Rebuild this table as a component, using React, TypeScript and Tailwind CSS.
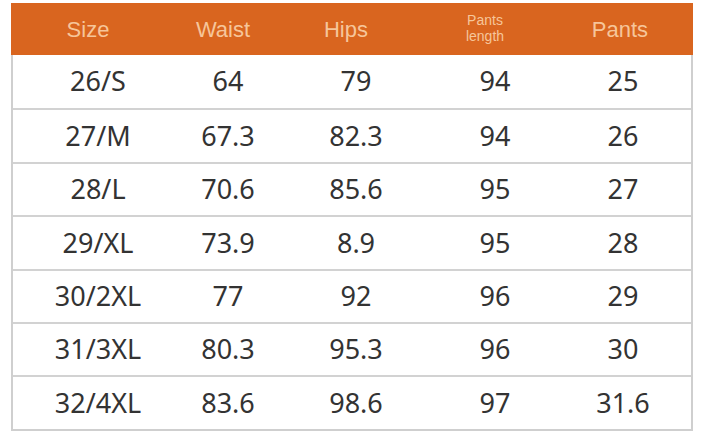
const rows = [
  ['26/S', '64', '79', '94', '25'],
  ['27/M', '67.3', '82.3', '94', '26'],
  ['28/L', '70.6', '85.6', '95', '27'],
  ['29/XL', '73.9', '8.9', '95', '28'],
  ['30/2XL', '77', '92', '96', '29'],
  ['31/3XL', '80.3', '95.3', '96', '30'],
  ['32/4XL', '83.6', '98.6', '97', '31.6'],
]

const cols = 'grid grid-cols-[170px_90px_166px_112px_144px]'

export default function App() {
  return (
    <div className="w-[703px] h-[431px] bg-white pt-[3px] pl-[11px]">
      <div className="w-[682px] border-x-2 border-b-2 border-[#cfcfcf]">
        <div
          className={`${cols} h-[52px] items-center bg-[#d9651f] text-[#f6c59a] -mx-[2px]`}
          style={{ fontFamily: '"Liberation Sans", Arial, sans-serif' }}
        >
          <div className="text-center text-[22px] pr-[16px]">Size</div>
          <div className="text-center text-[22px] -ml-[6px]">Waist</div>
          <div className="text-center text-[22px] pr-[16px]">Hips</div>
          <div className="flex flex-col items-center text-[14px] leading-[16px] pr-[16px] -mt-[2px]">
            <span>Pants</span>
            <span>length</span>
          </div>
          <div className="text-center text-[22px] pr-[2px]">Pants</div>
        </div>
        {rows.map((r, i) => (
          <div
            key={i}
            className={`${cols} h-[53.4px] items-center text-[#333333] text-[27px] ${i > 0 ? 'border-t-2 border-[#d2d2d2]' : ''}`}
            style={{ fontFamily: '"Noto Sans", sans-serif' }}
          >
            {r.map((c, j) => (
              <div key={j} className="text-center">
                {c}
              </div>
            ))}
          </div>
        ))}
      </div>
    </div>
  )
}
